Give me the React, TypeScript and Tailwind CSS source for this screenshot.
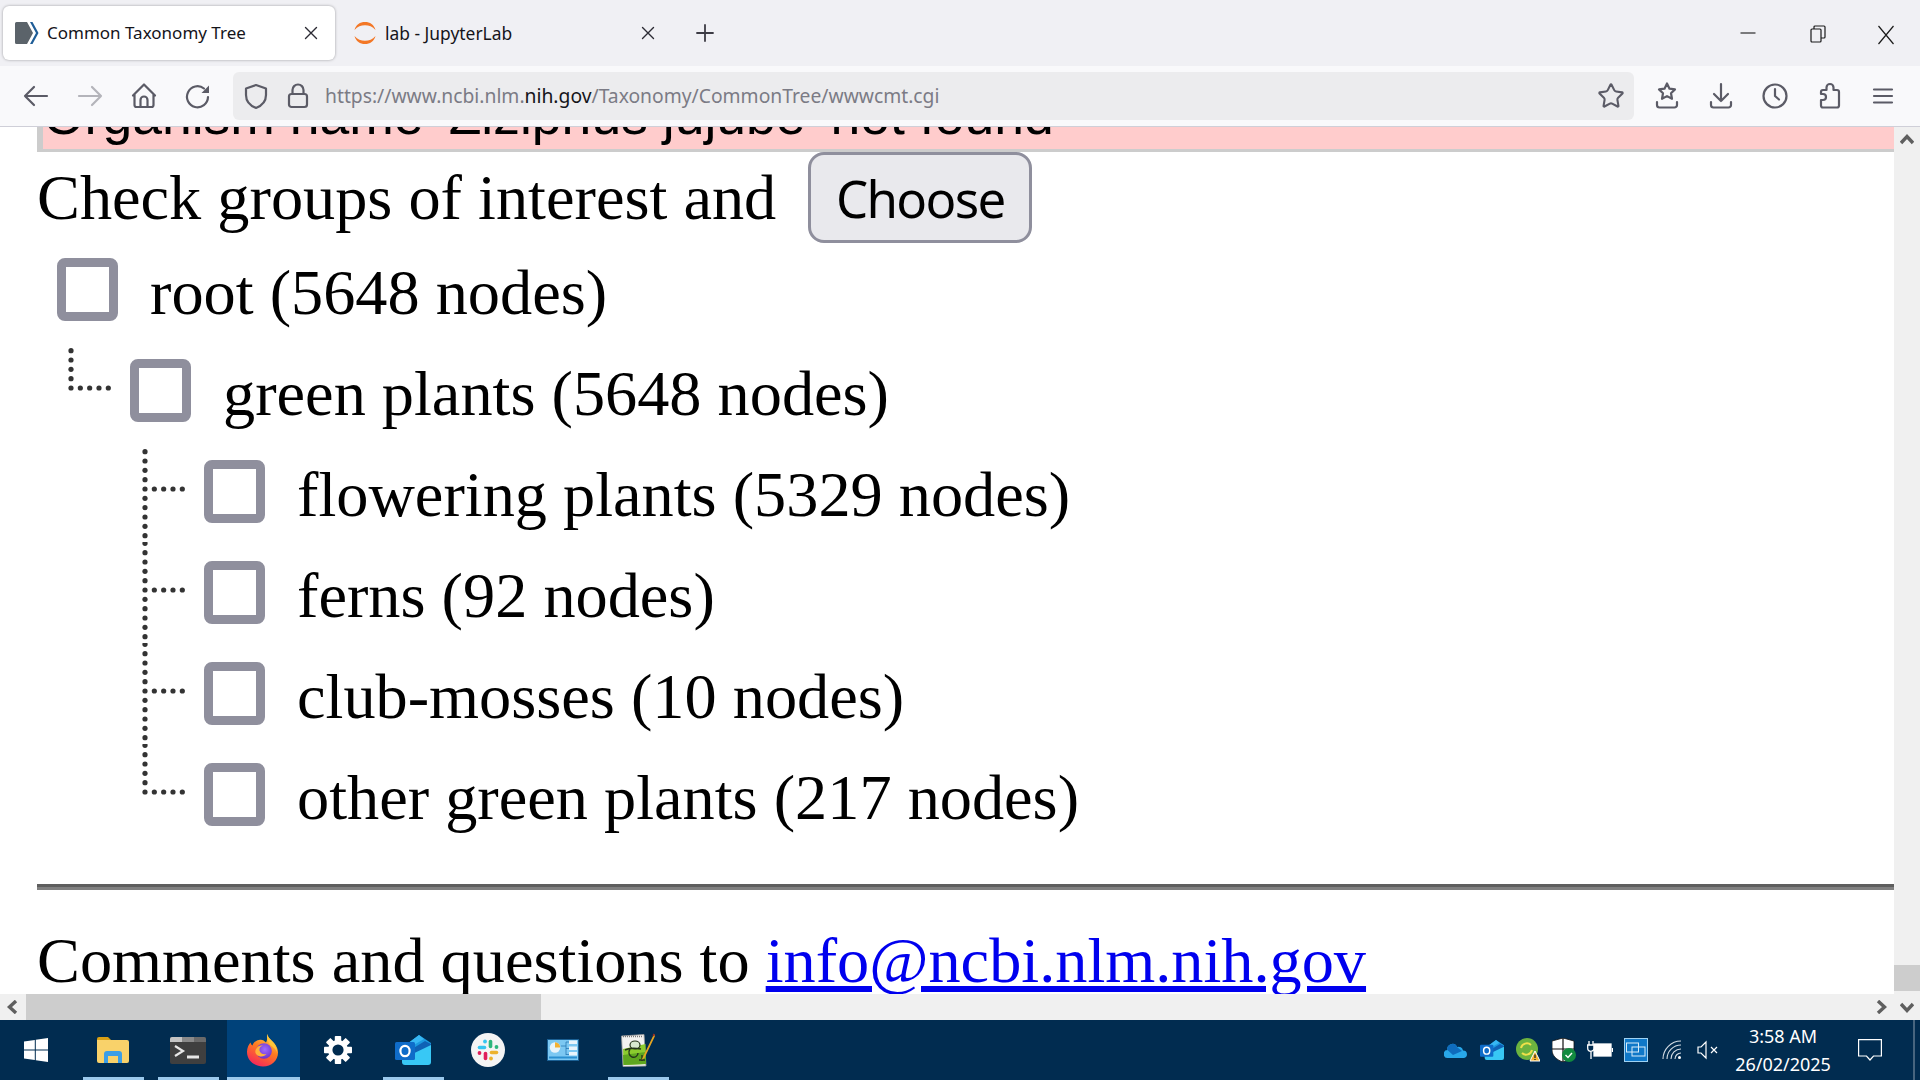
import { Star } from 'lucide-react';

const treeRows = [
  { label: 'root (5648 nodes)', depth: 0 },
  { label: 'green plants (5648 nodes)', depth: 1 },
  { label: 'flowering plants (5329 nodes)', depth: 2, first: true },
  { label: 'ferns (92 nodes)', depth: 2 },
  { label: 'club-mosses (10 nodes)', depth: 2 },
  { label: 'other green plants (217 nodes)', depth: 2, last: true },
];

function ToolIcon({ children, dim }: { children: React.ReactNode; dim?: boolean }) {
  return (
    <svg
      viewBox="0 0 32 32"
      fill="none"
      stroke={dim ? '#b4b4ba' : '#5b5b66'}
      strokeWidth="2.2"
      strokeLinecap="round"
      strokeLinejoin="round"
      className="w-8 h-8 shrink-0"
    >
      {children}
    </svg>
  );
}

function Connector({ first, last, single }: { first?: boolean; last?: boolean; single?: boolean }) {
  const dots: Array<[number, number]> = [];
  const from = single || first ? -4 : -5;
  const to = single || last ? 0 : 5;
  for (let k = from; k <= to; k++) dots.push([4, 48 + k * 9.33]);
  for (let k = 1; k <= 4; k++) dots.push([4 + k * 9.33, 48]);
  return (
    <svg viewBox="0 0 48 101" className="w-12 h-[101px] shrink-0">
      {dots.map(([x, y]) => (
        <circle key={`${x}-${y}`} cx={x} cy={y} r="2.6" fill="#333" />
      ))}
    </svg>
  );
}

function TabClose() {
  return (
    <svg viewBox="0 0 14 14" className="w-[14px] h-[14px]" stroke="#2b2a33" strokeWidth="1.4" strokeLinecap="round">
      <path d="M1.5 1.5l11 11M12.5 1.5l-11 11" />
    </svg>
  );
}

function Chevron({ dir }: { dir: 'up' | 'down' | 'left' | 'right' }) {
  const d = {
    up: 'M1 10 L7 3.500 L13 10',
    down: 'M1 4 L7 10.500 L13 4',
    left: 'M10 1 L3.500 7 L10 13',
    right: 'M4 1 L10.500 7 L4 13',
  }[dir];
  return (
    <svg viewBox="0 0 14 14" className="w-[14px] h-[14px]" fill="none" stroke="#5f5f5f" strokeWidth="3.4">
      <path d={d} />
    </svg>
  );
}

function TaskSlot({ active, open, children }: { active?: boolean; open?: boolean; children: React.ReactNode }) {
  return (
    <div className={`w-[73px] h-[60px] flex items-center justify-center relative pr-[1px] ${active ? 'bg-[#00427a]' : ''}`}>
      {children}
      {open && <div className={`absolute bottom-0 h-[3px] bg-[#9bc9ec] ${active ? 'left-0 right-0' : 'left-[6px] right-[6px]'}`} />}
    </div>
  );
}

function FirefoxIcon() {
  return (
    <svg viewBox="0 0 34 34" className="w-[34px] h-[34px]">
      <defs>
        <linearGradient id="ffOuter" x1="0.75" y1="0" x2="0.25" y2="1">
          <stop offset="0" stopColor="#ffd54a" />
          <stop offset="0.45" stopColor="#ff7a1f" />
          <stop offset="1" stopColor="#f5225e" />
        </linearGradient>
        <radialGradient id="ffGlobe" cx="0.55" cy="0.4" r="0.6">
          <stop offset="0" stopColor="#a06bff" />
          <stop offset="1" stopColor="#6a32c9" />
        </radialGradient>
      </defs>
      <path
        d="M21 1c1 3 2.500 4.500 5 7 3 2.800 6 6.500 6 11.500C32 27.500 25.500 33.500 17 33.500S1 27.500 1 19c0-4.500 1.800-7.500 3.500-9.500C5 11 5.500 12 6.500 12.500 7.500 9.500 10 7.500 13 7c3-1 5 .5 7 2.500C21.500 7 21.500 4 21 1z"
        fill="url(#ffOuter)"
      />
      <path d="M21 1c1 3 2.500 4.500 5 7 3 2.800 5 6.500 5 11-2-4-5-6-7-7-2-3-3.500-7-3-11z" fill="#ffc53a" />
      <circle cx="18" cy="18" r="7.800" fill="url(#ffGlobe)" />
      <path d="M10 16c1.500-3 4.500-4 7-3.500-2.500.5-4 2.500-3.500 5 .5 3 4 4.500 7 3.500-2 3-7 3.500-10 .5-1.500-1.500-1.500-3.500-.5-5.500z" fill="#ffb13a" />
    </svg>
  );
}

function OutlookIcon({ size }: { size: number }) {
  return (
    <svg viewBox="0 0 36 30" style={{ width: size, height: (size * 30) / 36 }}>
      <path d="M12 9 L24 0 L36 8 V14 H12z" fill="#1c9ae0" />
      <path d="M24 0 L29 4 L12 14 V9z" fill="#37b7f3" />
      <path d="M12 17 L30 6 L36 9 V13 L18 22z" fill="#0f62b5" />
      <path d="M7 24 L36 10 V27 a3 3 0 0 1-3 3 H10 a3 3 0 0 1-3-3z" fill="#38c8f5" />
      <rect x="0" y="7" width="20" height="18" rx="1.500" fill="#0f6cc9" />
      <ellipse cx="10" cy="16" rx="4.600" ry="5.200" fill="none" stroke="#fff" strokeWidth="2.200" />
    </svg>
  );
}

function SlackIcon() {
  return (
    <svg viewBox="0 0 34 34" className="w-[34px] h-[34px]">
      <circle cx="17" cy="17" r="17" fill="#f4f4f4" />
      <g fill="none" strokeWidth="3.600" strokeLinecap="round">
        <path d="M8.500 14.500H13.500" stroke="#36c5f0" />
        <path d="M19.500 8.500V13.500" stroke="#2eb67d" />
        <path d="M20.500 19.500H25.500" stroke="#ecb22e" />
        <path d="M14.500 20.500V25.500" stroke="#e01e5a" />
      </g>
      <circle cx="14" cy="8.500" r="1.900" fill="#36c5f0" />
      <circle cx="25.500" cy="14" r="1.900" fill="#2eb67d" />
      <circle cx="20" cy="25.500" r="1.900" fill="#ecb22e" />
      <circle cx="8.500" cy="20" r="1.900" fill="#e01e5a" />
    </svg>
  );
}

function GearIcon() {
  const teeth = [0, 45, 90, 135, 180, 225, 270, 315];
  return (
    <svg viewBox="0 0 28 28" className="w-7 h-7" fill="#fff">
      {teeth.map((a) => (
        <rect key={a} x="10.800" y="0" width="6.400" height="7" rx="0.800" transform={`rotate(${a} 14 14)`} />
      ))}
      <circle cx="14" cy="14" r="7.800" fill="none" stroke="#fff" strokeWidth="4.400" />
    </svg>
  );
}

function PanelIcon() {
  return (
    <svg viewBox="0 0 32 22" className="w-8 h-[22px]">
      <rect x="0.500" y="0.500" width="31" height="21" fill="#7cc8f2" stroke="#1a5f93" />
      <circle cx="8" cy="8.500" r="5.200" fill="#e8f4fb" />
      <path d="M8 8.500V3.300a5.200 5.200 0 0 1 5.200 5.200z" fill="#f2b134" />
      <path d="M14 7h5M19 3v13M19 3h3M19 9.500h3M19 15.500h3" stroke="#2a78b5" strokeWidth="0.800" fill="none" />
      <rect x="22" y="1.500" width="8" height="3.500" fill="#e8f4fb" />
      <rect x="22" y="7.500" width="8" height="3.500" fill="#e8f4fb" />
      <rect x="22" y="13" width="8" height="3.500" fill="#e8f4fb" />
      <rect x="2" y="17.500" width="28" height="2" fill="#2a8fd0" />
    </svg>
  );
}

function NotepadIcon() {
  return (
    <svg viewBox="0 0 34 34" className="w-[34px] h-[34px]">
      <path d="M0.500 3 L23 1.500 L25 33 L2 33.500z" fill="#f2f2f0" stroke="#9a9a9a" strokeWidth="0.800" />
      <path d="M2 3.500h20" stroke="#777" strokeWidth="1.500" strokeDasharray="1 1" />
      <path d="M2 16 L24.500 11 L25 31 L2.500 32z" fill="#8ccb2e" />
      <path d="M2 22 L24.800 19 L25 31 L2.500 32z" fill="#5fa61f" />
      <ellipse cx="14" cy="12" rx="5" ry="4" fill="#d9ead0" stroke="#27361c" strokeWidth="1.200" />
      <path d="M4 17c4-2 10-2 16-1M9 16c-2 3-1 7 2 8 3 1 6-1 6-4M18 27h6M21 22v6" stroke="#27361c" strokeWidth="1.400" fill="none" />
      <path d="M33 1 L22 24 L20.500 27 L23.500 25 L34 3z" fill="#e6a621" />
      <path d="M32.500 0.500 L34 1.500 L33 3.500 L31.500 2.500z" fill="#9b2c22" />
    </svg>
  );
}

export default function App() {
  return (
    <div className="h-screen w-full flex flex-col overflow-hidden bg-white font-['Noto_Sans',sans-serif]">
      {/* tab strip */}
      <div className="h-[66px] shrink-0 bg-[#f0f0f4] flex pt-[6px] pl-[3px] relative">
        <div className="w-[332px] h-[54px] bg-white rounded-[6px] shadow-[0_0_3px_rgba(0,0,0,0.35)] flex items-center pl-[12px] pr-[17px]">
          <svg viewBox="0 0 24 22" className="w-6 h-[22px] shrink-0">
            <path d="M0 1.500a1.500 1.500 0 0 1 1.500-1.500H12l6 11-6 11H1.500A1.500 1.500 0 0 1 0 20.500z" fill="#5b636a" />
            <path d="M15 0h2.500l6 11-6 11H15l6-11z" fill="#1f5d97" />
          </svg>
          <span className="ml-[8px] text-[17px] text-[#15141a] flex-1">Common Taxonomy Tree</span>
          <TabClose />
        </div>
        <div className="w-[338px] h-[54px] flex items-center pl-[18px] pr-[18px]">
          <svg viewBox="0 0 24 24" className="w-6 h-6 shrink-0" fill="#f37726">
            <path d="M1.500 9C3 3.500 7 1 12 1s9 2.500 10.500 8C19.500 5.500 16 4.200 12 4.200S4.500 5.500 1.500 9z" />
            <path d="M1.500 15C3 20.500 7 23 12 23s9-2.500 10.500-8C19.500 18.500 16 19.800 12 19.800S4.500 18.500 1.500 15z" />
          </svg>
          <span className="ml-[8px] text-[17.400px] text-[#15141a] flex-1">lab - JupyterLab</span>
          <TabClose />
        </div>
        <svg viewBox="0 0 18 18" className="w-[18px] h-[18px] mt-[18px] ml-[23px]" stroke="#3c3b44" strokeWidth="1.800" strokeLinecap="round">
          <path d="M9 1v16M1 9h16" />
        </svg>
        <div className="flex-1" />
        <div className="flex items-start pt-[19px] pr-[26px] gap-[52px]">
          <svg viewBox="0 0 16 16" className="w-4 h-4 mr-[2px]" stroke="#1a1a1a" strokeWidth="1.100"><path d="M0.500 8h15" /></svg>
          <svg viewBox="0 0 16 18" className="w-4 h-[18px]" fill="none" stroke="#1a1a1a" strokeWidth="1.200"><rect x="1" y="4" width="10" height="13" rx="1" /><path d="M4 4V2a1 1 0 0 1 1-1h9a1 1 0 0 1 1 1v10a1 1 0 0 1-1 1h-3" /></svg>
          <svg viewBox="0 0 16 20" className="w-4 h-5" stroke="#1a1a1a" strokeWidth="1.200"><path d="M0.500 1l15 18M15.500 1l-15 18" /></svg>
        </div>
      </div>

      {/* toolbar */}
      <div className="h-[61px] shrink-0 bg-[#f9f9fb] border-b border-[#cfcfd8] flex items-start pt-[6px]">
        <div className="flex items-center h-12 pl-[20px] gap-[22px]">
          <ToolIcon><path d="M5 16H27M14 7L5 16L14 25" /></ToolIcon>
          <ToolIcon dim><path d="M5 16H27M18 7L27 16L18 25" /></ToolIcon>
          <ToolIcon>
            <path d="M5 15.500L16 4.500L27 15.500M6.500 14V25a2 2 0 0 0 2 2H23.500a2 2 0 0 0 2-2V14" />
            <path d="M12.500 27V20a3.500 3.500 0 0 1 7 0V27" />
          </ToolIcon>
          <ToolIcon>
            <path d="M26 17a10.500 10.500 0 1 1-4-8.500" />
            <path d="M27 5.500v7.500h-7.500z" fill="#5b5b66" stroke="none" />
          </ToolIcon>
        </div>
        <div className="ml-[19px] w-[1401px] h-12 bg-[#ececee] rounded-[6px] flex items-center pl-[7px] pr-[9px]">
          <ToolIcon><path d="M16 5L26 8.500V15C26 22 21 26 16 28C11 26 6 22 6 15V8.500Z" /></ToolIcon>
          <div className="ml-[10px]">
            <ToolIcon>
              <rect x="7" y="14" width="18" height="13" rx="2.500" />
              <path d="M10.500 14V10a5.500 5.500 0 0 1 11 0V14" />
            </ToolIcon>
          </div>
          <span className="ml-[11px] pt-px text-[19.300px] text-[#7b7b85] flex-1 whitespace-nowrap">
            https://www.ncbi.nlm.<span className="text-[#15141a]">nih.gov</span>/Taxonomy/CommonTree/wwwcmt.cgi
          </span>
          <Star size={28} color="#5b5b66" strokeWidth={1.800} />
        </div>
        <div className="flex items-center h-12 ml-[17px] gap-[22px]">
          <ToolIcon>
            <path d="M16 3.500l2.500 5.200 5.500.7-4 3.900 1 5.500-5-2.700-5 2.700 1-5.500-4-3.900 5.500-.7z" />
            <path d="M6 22v3a2.500 2.500 0 0 0 2.500 2.500h15A2.500 2.500 0 0 0 26 25v-3" />
          </ToolIcon>
          <ToolIcon>
            <path d="M16 4V21M9 14l7 7 7-7" />
            <path d="M6 22v3a2.500 2.500 0 0 0 2.500 2.500h15A2.500 2.500 0 0 0 26 25v-3" />
          </ToolIcon>
          <ToolIcon>
            <circle cx="16" cy="16" r="11.500" />
            <path d="M16 9v7l4 3.500" />
          </ToolIcon>
          <ToolIcon>
            <path d="M10 27.500H24a2 2 0 0 0 2-2V12a2 2 0 0 0-2-2H20.500V7.500a3.500 3.500 0 0 0-7 0V10H10a2 2 0 0 0-2 2V14H10a3 3 0 0 1 0 6H8V25.500a2 2 0 0 0 2 2Z" />
          </ToolIcon>
          <ToolIcon><path d="M7 9.500H25M7 16H25M7 22.500H25" /></ToolIcon>
        </div>
      </div>

      {/* page + vertical scrollbar */}
      <div className="flex-1 min-h-0 flex">
        <div className="flex-1 min-w-0 overflow-hidden pl-[37px] font-['Liberation_Serif',serif] text-[64.300px] text-black">
          <div className="-mt-[60px] h-[85px] bg-[#ffcccc] border-l-[6px] border-b-[3px] border-[#cccccc] font-['Liberation_Sans',sans-serif] text-[53.500px] leading-[76px] whitespace-nowrap pt-[11px]">
            Organism name 'Ziziphus jujube' not found
          </div>
          <div className="h-[87px] flex items-start">
            <span className="leading-[91px]">Check groups of interest and</span>
            <button className="ml-[32px] w-[224px] h-[91px] pt-[2px] rounded-[16px] border-[3px] border-[#8f8f9d] bg-[#e9e9ed] font-['Noto_Sans',sans-serif] text-[51px] tracking-[-1.700px] text-black">
              Choose
            </button>
          </div>
          {treeRows.map((row) => (
            <div key={row.label} className="h-[101px] flex items-center whitespace-nowrap">
              {row.depth === 0 && <div className="w-5 shrink-0" />}
              {row.depth === 1 && (
                <div className="ml-[30px] mr-[15px]">
                  <Connector single />
                </div>
              )}
              {row.depth === 2 && (
                <div className="ml-[104px] mr-[15px]">
                  <Connector first={row.first} last={row.last} />
                </div>
              )}
              <input
                type="checkbox"
                className="appearance-none shrink-0 w-[61px] h-[63px] border-[9px] border-[#8f8f9d] rounded-[8px] bg-white"
              />
              <span className="ml-[32px] pt-[7px]">{row.label}</span>
            </div>
          ))}
          <div className="mt-[39px] h-[6px] border-t-[3px] border-b-[3px] border-t-[#5e5e5e] border-b-[#808080]" />
          <p className="mt-[34px] leading-[74px] whitespace-nowrap">
            Comments and questions to <a href="#" className="text-[#0000ee] underline">info@ncbi.nlm.nih.gov</a>
          </p>
        </div>
        <div className="w-[26px] shrink-0 bg-[#f0f0f0] flex flex-col items-center justify-between">
          <div className="h-[26px] flex items-center justify-center"><Chevron dir="up" /></div>
          <div className="w-full h-[26px] mb-[3px] bg-[#cdcdcd]" />
        </div>
      </div>

      {/* horizontal scrollbar */}
      <div className="h-[26px] shrink-0 bg-[#f0f0f0] flex items-center">
        <div className="w-[26px] flex justify-center"><Chevron dir="left" /></div>
        <div className="w-[515px] h-full bg-[#cdcdcd]" />
        <div className="flex-1" />
        <div className="w-[26px] flex justify-center"><Chevron dir="right" /></div>
        <div className="w-[26px] flex justify-center"><Chevron dir="down" /></div>
      </div>

      {/* windows taskbar */}
      <div className="h-[60px] shrink-0 bg-[#012c50] flex items-center relative">
        <div className="w-[77px] flex justify-center pr-[6px]">
          <svg viewBox="0 0 24 24" className="w-6 h-6" fill="#fff">
            <path d="M0 3.400L10.800 1.900V11.500H0zM11.800 1.700L24 0V11.500H11.800zM0 12.500H10.800V22.100L0 20.600zM11.800 12.500H24V24L11.800 22.300z" />
          </svg>
        </div>
        <div className="flex gap-[2px]">
          <TaskSlot open>
            <svg viewBox="0 0 32 26" className="w-8 h-[26px]">
              <path d="M0 2a2 2 0 0 1 2-2h9l3 3H0z" fill="#d9a015" />
              <path d="M0 3h30a2 2 0 0 1 2 2v19a2 2 0 0 1-2 2H2a2 2 0 0 1-2-2z" fill="#f9d26a" />
              <path d="M7 26V17a3 3 0 0 1 3-3h12a3 3 0 0 1 3 3v9h-4v-7H11v7z" fill="#3b9ee6" />
            </svg>
          </TaskSlot>
          <TaskSlot open>
            <svg viewBox="0 0 36 27" className="w-9 h-[27px]">
              <rect width="36" height="27" rx="2" fill="#3f3f3f" />
              <path d="M0 2a2 2 0 0 1 2-2h10v5H0z" fill="#c4c4c4" />
              <rect x="12" width="12" height="5" fill="#8a8a8a" />
              <path d="M24 0h10a2 2 0 0 1 2 2v3H24z" fill="#6a6a6a" />
              <path d="M5 9l8 5-8 5" fill="none" stroke="#e6e6e6" strokeWidth="2.200" />
              <rect x="17" y="18.500" width="12" height="3" fill="#e6e6e6" />
            </svg>
          </TaskSlot>
          <TaskSlot active open><FirefoxIcon /></TaskSlot>
          <TaskSlot><GearIcon /></TaskSlot>
          <TaskSlot open><OutlookIcon size={36} /></TaskSlot>
          <TaskSlot><SlackIcon /></TaskSlot>
          <TaskSlot><PanelIcon /></TaskSlot>
          <TaskSlot open><NotepadIcon /></TaskSlot>
        </div>
        <div className="flex-1" />
        {/* tray */}
        <div className="flex items-center">
          <div className="w-9 flex justify-center">
            <svg viewBox="0 0 24 16" className="w-6 h-4">
              <path d="M4 16a4 4 0 0 1-.5-8 5 5 0 0 1 9.500-3 4.500 4.500 0 0 1 6 3.500 3.800 3.800 0 0 1 1 7.500z" fill="#28a8ea" />
              <path d="M3.500 8a5 5 0 0 1 9.500-3l5 4-9 4z" fill="#0f6cbd" />
            </svg>
          </div>
          <div className="w-9 flex justify-center"><OutlookIcon size={24} /></div>
          <div className="w-9 flex justify-center">
            <svg viewBox="0 0 24 24" className="w-6 h-6">
              <circle cx="11" cy="11" r="11" fill="#6cb33f" />
              <path d="M5 10a6 6 0 0 1 10-3M16 12a6 6 0 0 1-10 3" stroke="#f0e04a" strokeWidth="2" fill="none" />
              <path d="M14 23L19 13l5 10z" fill="#f6b42c" stroke="#fff" strokeWidth="1" />
              <path d="M19 16.500v3.500M19 21v1" stroke="#222" strokeWidth="1.300" />
            </svg>
          </div>
          <div className="w-9 flex justify-center">
            <svg viewBox="0 0 24 24" className="w-6 h-6">
              <path d="M11 0L22 3V12C22 18 17 22 11 24C5 22 0 18 0 12V3Z" fill="#fff" stroke="#111" strokeWidth="0.800" />
              <path d="M11 0V24M0 11H22" stroke="#111" strokeWidth="1.200" />
              <circle cx="17" cy="17" r="7" fill="#128a3f" />
              <path d="M13.500 17l2.500 2.500 4-4.500" stroke="#fff" strokeWidth="1.400" fill="none" />
            </svg>
          </div>
          <div className="w-9 flex justify-center">
            <svg viewBox="0 0 26 20" className="w-[26px] h-5" fill="none" stroke="#fff" strokeWidth="1.300">
              <path d="M2 1v4M6 1v4M0.700 5h6.600v3a3 3 0 0 1-6.600 0zM4 11v8" />
              <rect x="7" y="4" width="17" height="12" fill="#fff" />
              <path d="M25.500 8v4" />
            </svg>
          </div>
          <div className="w-9 flex justify-center">
            <div className="w-6 h-6 bg-[#0f78c8] border border-[#9fd2f2] flex items-center justify-center">
              <svg viewBox="0 0 20 16" className="w-5 h-4" fill="none" stroke="#d7ecfa" strokeWidth="1">
                <rect x="0.500" y="1" width="12" height="9" />
                <rect x="6" y="5" width="13" height="9" />
              </svg>
            </div>
          </div>
          <div className="w-9 flex justify-center">
            <svg viewBox="0 0 20 20" className="w-5 h-5" fill="none" stroke="#d4dde5" strokeWidth="1.100">
              <path d="M1 19a18 18 0 0 1 18-18M5 19a14 14 0 0 1 14-14M9 19a10 10 0 0 1 10-10M13 19a6 6 0 0 1 6-6" />
              <circle cx="17.500" cy="17.500" r="1.500" fill="#fff" stroke="none" />
            </svg>
          </div>
          <div className="w-9 flex justify-center">
            <svg viewBox="0 0 22 20" className="w-[22px] h-5" fill="none" stroke="#fff" strokeWidth="1.200">
              <path d="M1 7v6h3l5 5V2L4 7z" />
              <path d="M14 7l6 6M20 7l-6 6" />
            </svg>
          </div>
        </div>
        <div className="w-[88px] ml-[13px] flex flex-col items-center text-white text-[18px] leading-[28px] whitespace-nowrap">
          <span>3:58 AM</span>
          <span>26/02/2025</span>
        </div>
        <div className="w-[86px] flex justify-center">
          <svg viewBox="0 0 24 22" className="w-6 h-[22px]" fill="none" stroke="#fff" strokeWidth="1.200">
            <path d="M0.600 0.600H23.400V17H15.500L12 21 8.500 17H0.600Z" />
          </svg>
        </div>
        <div className="w-[2px] h-full bg-[#47657f] mr-[5px]" />
      </div>
    </div>
  );
}
